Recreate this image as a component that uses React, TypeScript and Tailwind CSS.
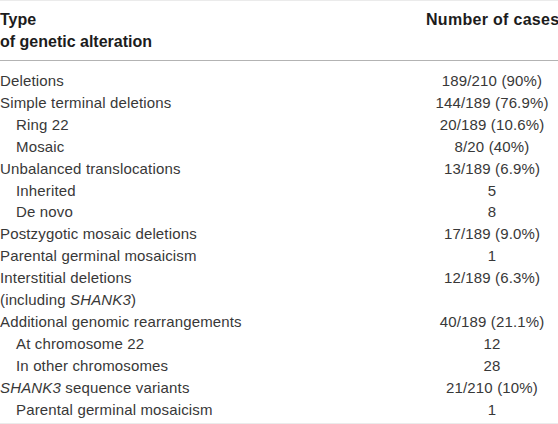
import React from "react";

type Row = { label: React.ReactNode; value: string; indent?: boolean };

const rows: Row[] = [
  { label: "Deletions", value: "189/210 (90%)" },
  { label: "Simple terminal deletions", value: "144/189 (76.9%)" },
  { label: "Ring 22", value: "20/189 (10.6%)", indent: true },
  { label: "Mosaic", value: "8/20 (40%)", indent: true },
  { label: "Unbalanced translocations", value: "13/189 (6.9%)" },
  { label: "Inherited", value: "5", indent: true },
  { label: "De novo", value: "8", indent: true },
  { label: "Postzygotic mosaic deletions", value: "17/189 (9.0%)" },
  { label: "Parental germinal mosaicism", value: "1" },
  { label: "Interstitial deletions", value: "12/189 (6.3%)" },
  { label: <>(including <i>SHANK3</i>)</>, value: "" },
  { label: "Additional genomic rearrangements", value: "40/189 (21.1%)" },
  { label: "At chromosome 22", value: "12", indent: true },
  { label: "In other chromosomes", value: "28", indent: true },
  { label: <><i>SHANK3</i> sequence variants</>, value: "21/210 (10%)" },
  { label: "Parental germinal mosaicism", value: "1", indent: true },
];

export default function App() {
  return (
    <div
      className="w-[558px] h-[424px] bg-white text-[15px] text-[#383838]"
      style={{ fontFamily: '"Liberation Sans", Arial, sans-serif' }}
    >
      <div className="border-t border-[#ebebeb]">
        <div className="flex border-b border-[#b3b3b3] pt-[8px] pb-[8px] font-bold text-[#1c1c1c] text-[16px] leading-[21.5px]">
          <div className="flex-1">
            <div>Type</div>
            <div>of genetic alteration</div>
          </div>
          <div className="w-[132px] text-center whitespace-nowrap tracking-[0.3px]">Number of cases</div>
        </div>
        <div className="pt-[9px] pb-[2px] border-b border-[#ebebeb] leading-[21.9px] tracking-[0.15px]">
          {rows.map((r, i) => (
            <div key={i} className="flex">
              <div className={`flex-1 ${r.indent ? "pl-[16px]" : ""}`}>{r.label}</div>
              <div className="w-[132px] text-center">{r.value}</div>
            </div>
          ))}
        </div>
      </div>
    </div>
  );
}
